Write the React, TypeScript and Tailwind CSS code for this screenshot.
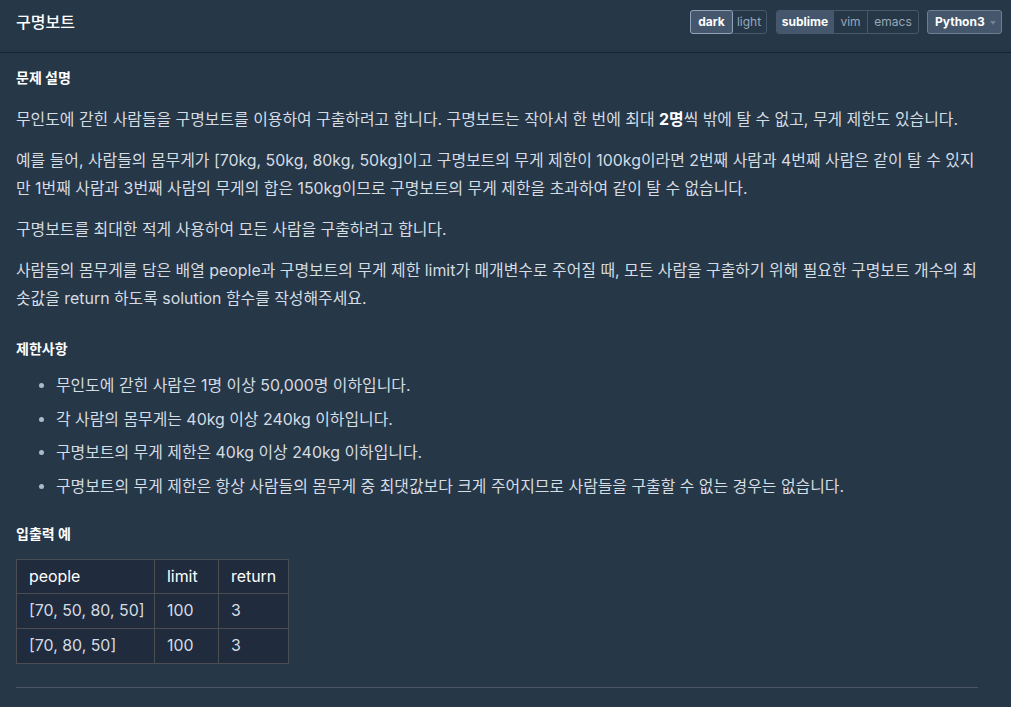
import React from "react";

const font = { fontFamily: 'Inter, "Noto Sans CJK KR", "Noto Sans", sans-serif' };

export default function App() {
  return (
    <div className="w-[1011px] h-[707px] bg-[#263747] text-[#d5dce3] overflow-hidden" style={font}>
      <div className="h-[53px] flex items-center justify-between pl-4 pr-[9px] border-b border-[#172334]">
        <div className="text-white text-[16px] font-medium -mt-[8px]">구명보트</div>
        <div className="flex items-center -mt-[9px]">
          <div className="flex h-[24px] rounded-[3px] border border-[#46586b] text-[12px] leading-none">
            <div className="w-[43px] bg-[#44576c] text-white font-bold justify-center flex items-center border border-[#8fa3b8] rounded-[3px] -m-px">dark</div>
            <div className="w-[34px] text-[#98a8b9] justify-center flex items-center">light</div>
          </div>
          <div className="ml-[9px] flex h-[24px] rounded-[3px] border border-[#46586b] text-[12px] leading-none overflow-hidden">
            <div className="w-[57px] bg-[#44576c] text-white font-bold justify-center flex items-center border-r border-[#46586b]">sublime</div>
            <div className="w-[34px] text-[#98a8b9] justify-center flex items-center border-r border-[#46586b]">vim</div>
            <div className="w-[50px] text-[#98a8b9] justify-center flex items-center">emacs</div>
          </div>
          <div className="ml-[8px] w-[75px] h-[24px] rounded-[3px] border border-[#6b7e92] bg-[#44576c] text-white text-[12px] font-bold flex items-center pl-[7px] relative">
            Python3
            <span className="absolute right-[5px] top-[10px] w-0 h-0 border-l-[3px] border-r-[3px] border-t-[4px] border-l-transparent border-r-transparent border-t-[#6f8091]"></span>
          </div>
        </div>
      </div>

      <div className="pl-4 pr-[33px] pt-[15px] text-[15.9px] leading-[28px]">
        <h5 className="text-white font-bold text-[14px] leading-[20px] mb-[18px]">문제 설명</h5>
        <p className="mb-[13px]">무인도에 갇힌 사람들을 구명보트를 이용하여 구출하려고 합니다. 구명보트는 작아서 한 번에 최대 <b className="text-white">2명</b>씩 밖에 탈 수 없고, 무게 제한도 있습니다.</p>
        <p className="mb-[13px]">예를 들어, 사람들의 몸무게가 [70kg, 50kg, 80kg, 50kg]이고 구명보트의 무게 제한이 100kg이라면 2번째 사람과 4번째 사람은 같이 탈 수 있지만 1번째 사람과 3번째 사람의 무게의 합은 150kg이므로 구명보트의 무게 제한을 초과하여 같이 탈 수 없습니다.</p>
        <p className="mb-[13px]">구명보트를 최대한 적게 사용하여 모든 사람을 구출하려고 합니다.</p>
        <p className="mb-[26px]">사람들의 몸무게를 담은 배열 people과 구명보트의 무게 제한 limit가 매개변수로 주어질 때, 모든 사람을 구출하기 위해 필요한 구명보트 개수의 최솟값을 return 하도록 solution 함수를 작성해주세요.</p>

        <h5 className="text-white font-bold text-[14px] leading-[20px] mb-[13px]">제한사항</h5>
        <ul className="pl-[40px] list-disc marker:text-[#b0bac5]">
          <li className="leading-[28px] mb-[5.7px]">무인도에 갇힌 사람은 1명 이상 50,000명 이하입니다.</li>
          <li className="leading-[28px] mb-[5.7px]">각 사람의 몸무게는 40kg 이상 240kg 이하입니다.</li>
          <li className="leading-[28px] mb-[5.7px]">구명보트의 무게 제한은 40kg 이상 240kg 이하입니다.</li>
          <li className="leading-[28px]">구명보트의 무게 제한은 항상 사람들의 몸무게 중 최댓값보다 크게 주어지므로 사람들을 구출할 수 없는 경우는 없습니다.</li>
        </ul>

        <h5 className="text-white font-bold text-[14px] leading-[20px] mt-[23px] mb-[15px]">입출력 예</h5>
        <table className="bg-[#202b3d] border-collapse">
          <thead>
            <tr className="h-[34px]">
              <th className="border border-[#4a4d52] text-left font-normal text-white pl-[12px] w-[138px]">people</th>
              <th className="border border-[#4a4d52] text-left font-normal text-white pl-[12px] w-[64px]">limit</th>
              <th className="border border-[#4a4d52] text-left font-normal text-white pl-[12px] pr-[12px]">return</th>
            </tr>
          </thead>
          <tbody>
            <tr className="h-[35px]">
              <td className="border border-[#4a4d52] pl-[12px]">[70, 50, 80, 50]</td>
              <td className="border border-[#4a4d52] pl-[12px]">100</td>
              <td className="border border-[#4a4d52] pl-[12px]">3</td>
            </tr>
            <tr className="h-[35px]">
              <td className="border border-[#4a4d52] pl-[12px]">[70, 80, 50]</td>
              <td className="border border-[#4a4d52] pl-[12px]">100</td>
              <td className="border border-[#4a4d52] pl-[12px]">3</td>
            </tr>
          </tbody>
        </table>
        <hr className="mt-[23px] w-[962px] border-t border-[#4a5664]" />
      </div>
    </div>
  );
}
